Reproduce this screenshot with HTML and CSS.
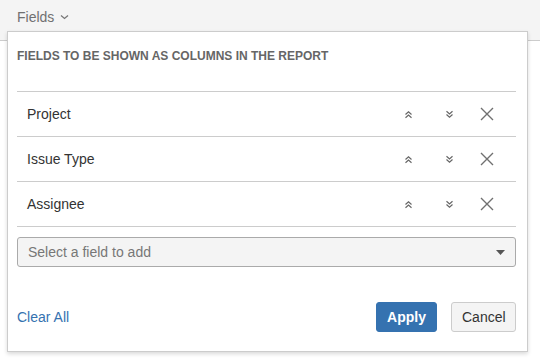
FILE: index.html
```html
<!DOCTYPE html>
<html lang="en">

<head>
    <meta charset="utf-8">
    <meta name="viewport" content="width=device-width, initial-scale=1.0">
    <title>Fields</title>
    <link rel="stylesheet" href="styles.css">
</head>

<body>

    <section class="toolbar">
        <button class="fields-trigger">Fields
            <svg class="caret" width="9" height="6" viewBox="0 0 9 6"><path d="M1 1.5 L4.5 4.5 L8 1.5" fill="none" stroke="#777" stroke-width="1.3"/></svg>
        </button>
    </section>

    <div class="panel">
        <h2 class="panel-title">FIELDS TO BE SHOWN AS COLUMNS IN THE REPORT</h2>

        <ul class="field-list">
            <li class="field-row">
                <span class="field-name">Project</span>
                <span class="icon up"><svg width="9" height="9" viewBox="0 0 9 9"><path d="M1.5 4.5 L4.5 1.8 L7.5 4.5 M1.5 7.7 L4.5 5 L7.5 7.7" fill="none" stroke="#666" stroke-width="1.2"/></svg></span>
                <span class="icon down"><svg width="9" height="9" viewBox="0 0 9 9"><path d="M1.5 1.3 L4.5 4 L7.5 1.3 M1.5 4.5 L4.5 7.2 L7.5 4.5" fill="none" stroke="#666" stroke-width="1.2"/></svg></span>
                <span class="icon remove"><svg width="14" height="14" viewBox="0 0 14 14"><path d="M1 1 L13 13 M13 1 L1 13" fill="none" stroke="#707070" stroke-width="1.4"/></svg></span>
            </li>
            <li class="field-row">
                <span class="field-name">Issue Type</span>
                <span class="icon up"><svg width="9" height="9" viewBox="0 0 9 9"><path d="M1.5 4.5 L4.5 1.8 L7.5 4.5 M1.5 7.7 L4.5 5 L7.5 7.7" fill="none" stroke="#666" stroke-width="1.2"/></svg></span>
                <span class="icon down"><svg width="9" height="9" viewBox="0 0 9 9"><path d="M1.5 1.3 L4.5 4 L7.5 1.3 M1.5 4.5 L4.5 7.2 L7.5 4.5" fill="none" stroke="#666" stroke-width="1.2"/></svg></span>
                <span class="icon remove"><svg width="14" height="14" viewBox="0 0 14 14"><path d="M1 1 L13 13 M13 1 L1 13" fill="none" stroke="#707070" stroke-width="1.4"/></svg></span>
            </li>
            <li class="field-row">
                <span class="field-name">Assignee</span>
                <span class="icon up"><svg width="9" height="9" viewBox="0 0 9 9"><path d="M1.5 4.5 L4.5 1.8 L7.5 4.5 M1.5 7.7 L4.5 5 L7.5 7.7" fill="none" stroke="#666" stroke-width="1.2"/></svg></span>
                <span class="icon down"><svg width="9" height="9" viewBox="0 0 9 9"><path d="M1.5 1.3 L4.5 4 L7.5 1.3 M1.5 4.5 L4.5 7.2 L7.5 4.5" fill="none" stroke="#666" stroke-width="1.2"/></svg></span>
                <span class="icon remove"><svg width="14" height="14" viewBox="0 0 14 14"><path d="M1 1 L13 13 M13 1 L1 13" fill="none" stroke="#707070" stroke-width="1.4"/></svg></span>
            </li>
        </ul>

        <div class="field-select">
            <span>Select a field to add</span>
            <svg width="9" height="5" viewBox="0 0 9 5"><path d="M0 0 L9 0 L4.5 5 Z" fill="#555"/></svg>
        </div>

        <div class="panel-footer">
            <a class="clear" href="#">Clear All</a>
            <div class="buttons">
                <button class="btn apply">Apply</button>
                <button class="btn cancel">Cancel</button>
            </div>
        </div>
    </div>

</body></html>
```

FILE: styles.css
```css
body {
    box-sizing: border-box;
    margin: 0;
    background: #fff;
    font-family: 'Liberation Sans', Arial, sans-serif;
    font-size: 14px;
    color: #333;
}

.toolbar {
    height: 40px;
    background: #f4f4f4;
    border-bottom: 1px solid #ccc;
}

.fields-trigger {
    display: flex;
    align-items: center;
    gap: 6px;
    border: 0;
    background: none;
    font-family: inherit;
    font-size: 14px;
    color: #707070;
    padding: 4px 0 0 17px;
    height: 25px;
    box-sizing: content-box;
}

.caret {
    margin-top: 1px;
}

.panel {
    position: absolute;
    top: 31px;
    left: 7px;
    width: 521px;
    height: 321px;
    box-sizing: border-box;
    background: #fff;
    border: 1px solid #ccc;
    box-shadow: 0 2px 4px rgba(0, 0, 0, .15);
    padding: 0 11px 0 9px;
}

.panel-title {
    margin: 0;
    padding: 17px 0 0 0;
    height: 42px;
    box-sizing: border-box;
    font-size: 12px;
    font-weight: bold;
    color: #666;
    line-height: 14px;
}

.field-list {
    list-style: none;
    margin: 17px 0 0 0;
    padding: 0;
    border-top: 1px solid #ccc;
}

.field-row {
    display: flex;
    align-items: center;
    height: 44px;
    border-bottom: 1px solid #ccc;
    padding-left: 10px;
}

.field-name {
    flex: 1;
}

.icon {
    display: flex;
    align-items: center;
    justify-content: center;
}

.icon.up {
    width: 20px;
    margin-right: 21px;
}

.icon.down {
    width: 20px;
    margin-right: 18px;
}

.icon.remove {
    width: 20px;
    margin-right: 19px;
}

.field-select {
    margin-top: 10px;
    height: 28px;
    border: 1px solid #aaa;
    border-radius: 3px;
    background: #f4f4f4;
    display: flex;
    align-items: center;
    justify-content: space-between;
    padding: 0 10px 0 10px;
    color: #777;
}

.panel-footer {
    margin-top: 35px;
    display: flex;
    align-items: center;
    justify-content: space-between;
}

.clear {
    color: #3572b0;
    text-decoration: none;
}

.buttons {
    display: flex;
    gap: 14px;
}

.btn {
    height: 30px;
    border-radius: 3px;
    font-family: inherit;
    font-size: 14px;
    padding: 0 10px;
}

.apply {
    width: 61px;
    background: #3572b0;
    border: 1px solid #3572b0;
    color: #fff;
    font-weight: bold;
}

.cancel {
    width: 65px;
    background: #f4f4f4;
    border: 1px solid #ccc;
    color: #333;
}
```
